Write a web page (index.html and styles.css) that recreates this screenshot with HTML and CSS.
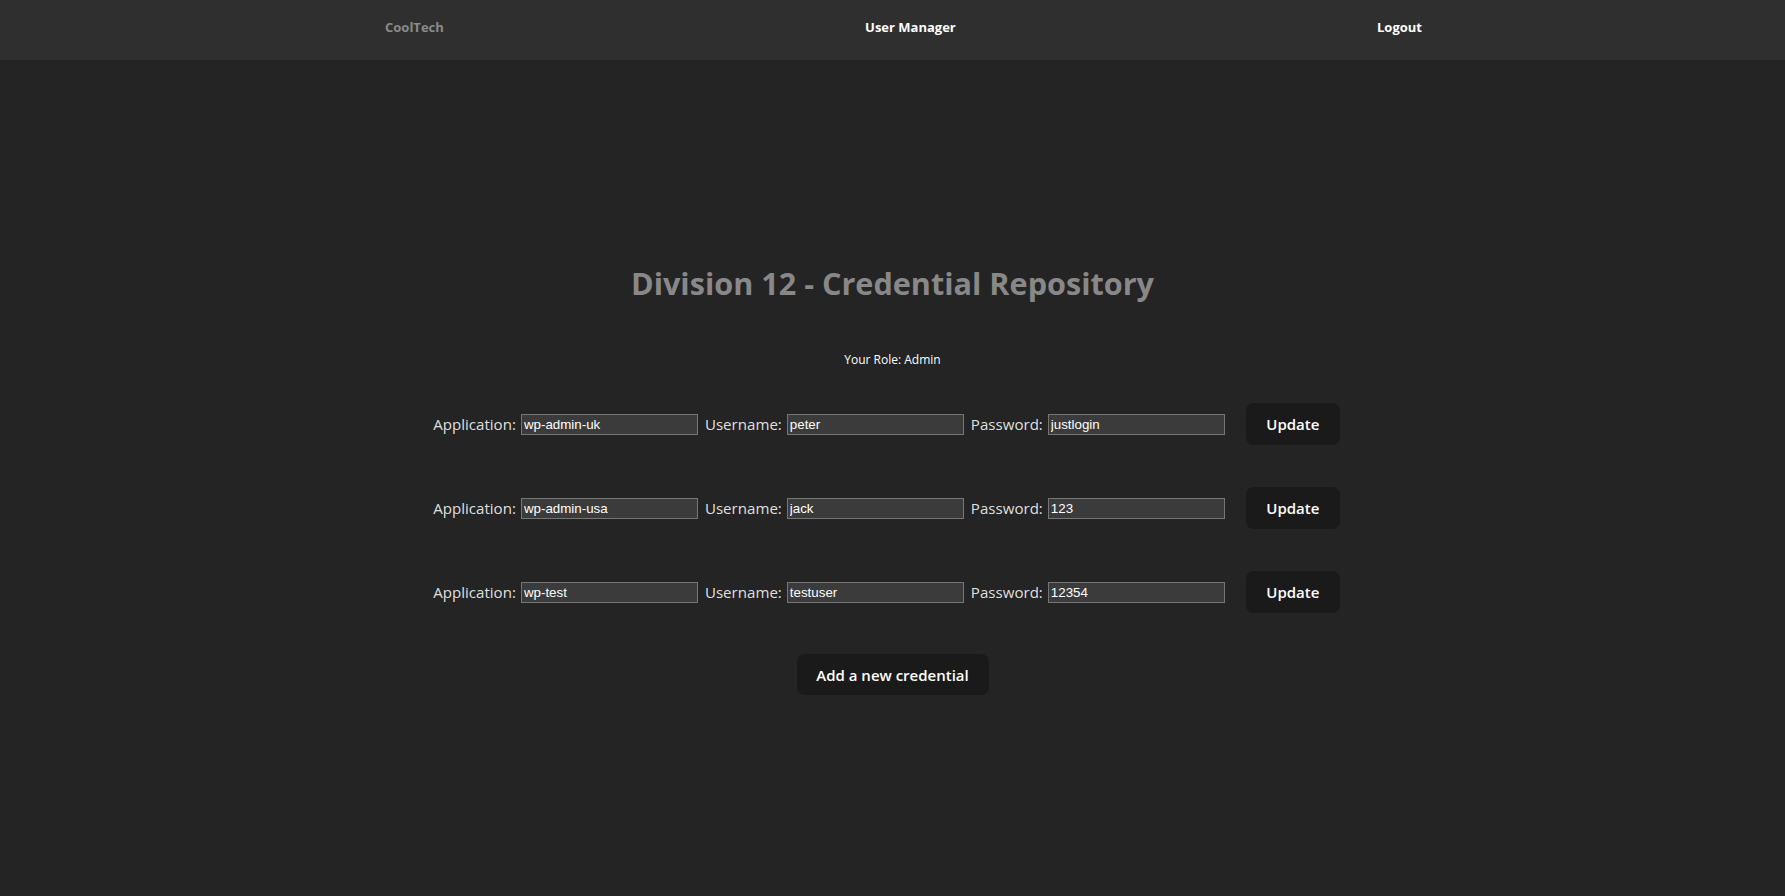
FILE: index.html
```html
<!DOCTYPE html>
<html>
<head>
<meta charset="utf-8">
<link rel="stylesheet" href="styles.css">
</head>
<body>
<header class="topbar">
  <nav class="nav">
    <span class="brand">CoolTech</span>
    <span class="nav-link">User Manager</span>
    <span class="nav-link">Logout</span>
  </nav>
</header>
<main class="main">
  <h1 class="title">Division 12 - Credential Repository</h1>
  <p class="role">Your Role: Admin</p>
  <div class="rows">
    <div class="row">
      <label class="lbl">Application:</label><input class="field" value="wp-admin-uk">
      <label class="lbl">Username:</label><input class="field" value="peter">
      <label class="lbl">Password:</label><input class="field" value="justlogin">
      <button class="btn btn-update">Update</button>
    </div>
    <div class="row">
      <label class="lbl">Application:</label><input class="field" value="wp-admin-usa">
      <label class="lbl">Username:</label><input class="field" value="jack">
      <label class="lbl">Password:</label><input class="field" value="123">
      <button class="btn btn-update">Update</button>
    </div>
    <div class="row">
      <label class="lbl">Application:</label><input class="field" value="wp-test">
      <label class="lbl">Username:</label><input class="field" value="testuser">
      <label class="lbl">Password:</label><input class="field" value="12354">
      <button class="btn btn-update">Update</button>
    </div>
  </div>
  <button class="btn btn-add">Add a new credential</button>
</main>
</body>
</html>
```
FILE: styles.css
```css
html, body {
  margin: 0;
  padding: 0;
}
body {
  background: #242424;
  color: rgba(255, 255, 255, 0.87);
  font-family: "Open Sans", "Noto Sans", sans-serif;
  min-height: 896px;
}
.topbar {
  background: #2f2f2f;
  height: 60px;
  display: flex;
  align-items: center;
}
.nav {
  flex: 1;
  display: flex;
  justify-content: space-between;
  padding: 0 363px 0 385px;
  font-size: 13px;
  font-weight: 700;
  margin-top: -6px;
}
.brand {
  color: #8a8a8a;
}
.nav-link {
  color: #ffffff;
}
.main {
  display: flex;
  flex-direction: column;
  align-items: center;
}
.title {
  margin: 201px 0 0;
  font-size: 30.6px;
  font-weight: 700;
  color: #888888;
  line-height: 44px;
}
.role {
  margin: 46px 0 0;
  font-size: 12px;
  color: #ffffff;
}
.rows {
  margin-top: 35px;
  display: flex;
  flex-direction: column;
  gap: 42px;
}
.row {
  display: flex;
  align-items: center;
  margin-left: -12px;
}
.lbl {
  font-size: 15.1px;
  color: rgba(255, 255, 255, 0.87);
  margin-right: 5px;
}
.field {
  box-sizing: border-box;
  width: 177px;
  height: 21px;
  margin: 0 7px 0 0;
  padding: 1px 2px;
  background: #3b3b3b;
  border: 1px solid #767676;
  color: #ffffff;
  font-family: "Liberation Sans", Arial, sans-serif;
  font-size: 13.33px;
}
.btn {
  box-sizing: border-box;
  border: 1px solid transparent;
  border-radius: 8px;
  background: #1a1a1a;
  color: #ffffff;
  font-family: "Open Sans", "Noto Sans", sans-serif;
  font-size: 15px;
  font-weight: 600;
  height: 42px;
  padding: 0 19px;
}
.btn-update {
  margin-left: 14px;
  width: 94px;
}
.btn-add {
  margin-top: 41px;
  width: 192px;
  height: 41px;
  padding: 0;
}
```
